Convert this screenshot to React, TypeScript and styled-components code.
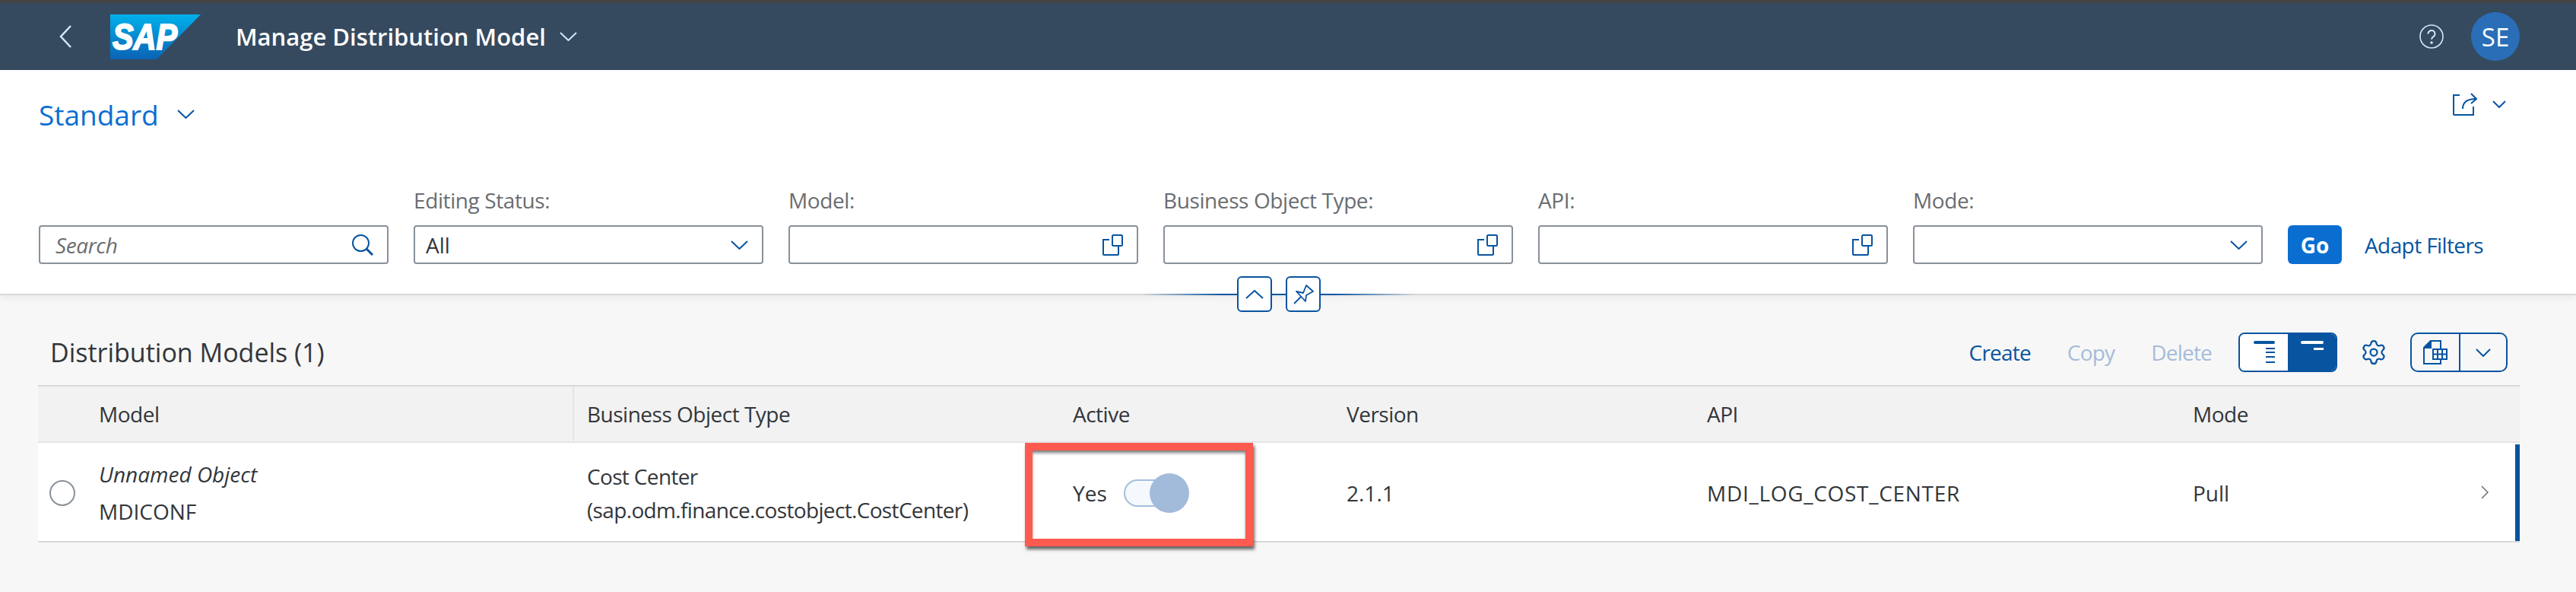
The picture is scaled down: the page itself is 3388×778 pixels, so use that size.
import React from "react";
import styled, { createGlobalStyle } from "styled-components";
import { Settings } from "lucide-react";

const Global = createGlobalStyle`
  html, body { margin: 0; padding: 0; background: #f7f7f7; }
  body { font-family: "Open Sans", "Noto Sans", sans-serif; color: #32363a; }
  * { box-sizing: border-box; }
`;

const BLUE = "#0854a0";

const Page = styled.div`
  width: 3388px;
  height: 778px;
  overflow: hidden;
  background: #f7f7f7;
`;

const Shell = styled.header`
  height: 92px;
  border-top: 4px solid #444;
  background: #354a5f;
  display: flex;
  align-items: center;
  padding: 0 74px 0 78px;
`;
const Back = styled.svg`
  width: 17px;
  height: 30px;
  margin-right: 50px;
`;
const Logo = styled.svg`
  width: 119px;
  height: 59px;
  margin-right: 46px;
`;
const AppTitle = styled.div`
  font-size: 31px;
  font-weight: 600;
  color: #fff;
  margin-right: 18px;
`;
const ShellRight = styled.div`
  margin-left: auto;
  display: flex;
  align-items: center;
  gap: 36px;
`;
const Avatar = styled.div`
  width: 64px;
  height: 64px;
  border-radius: 50%;
  background: #2a6eb7;
  color: #fff;
  font-size: 33px;
  display: flex;
  align-items: center;
  justify-content: center;
`;

const FilterBar = styled.section`
  position: relative;
  height: 296px;
  background: #fff;
  border-bottom: 2px solid #d9d9d9;
  box-shadow: 0 4px 8px rgba(0, 0, 0, 0.05);
`;
const VariantRow = styled.div`
  height: 114px;
  display: flex;
  align-items: center;
  padding: 2px 92px 0 51px;
`;
const VariantName = styled.div`
  font-size: 37px;
  color: #0a6ed1;
  margin-right: 24px;
`;
const ShareGroup = styled.div`
  margin-left: auto;
  display: flex;
  align-items: center;
  gap: 20px;
  margin-top: -26px;
`;
const Filters = styled.div`
  display: flex;
  align-items: flex-end;
  gap: 33px;
  padding: 38px 0 0 51px;
`;
const Field = styled.div`
  width: 460px;
  display: flex;
  flex-direction: column;
  gap: 14px;
`;
const FieldLabel = styled.label`
  font-size: 28px;
  line-height: 38px;
  color: #6a6d70;
  letter-spacing: -0.4px;
`;
const InputBox = styled.div`
  height: 51px;
  border: 2px solid #89919a;
  border-radius: 4px;
  background: #fff;
  display: flex;
  align-items: center;
  justify-content: space-between;
  padding: 0 18px 0 14px;
  font-size: 28px;
`;
const Placeholder = styled.span`
  font-style: italic;
  color: #6a6d70;
  padding-left: 6px;
  letter-spacing: -0.4px;
`;
const GoButton = styled.button`
  width: 71px;
  height: 51px;
  border: 0;
  border-radius: 6px;
  background: #0a6ed1;
  color: #fff;
  font: 700 28px "Open Sans", sans-serif;
  padding: 0;
`;
const TextAction = styled.span<{ $disabled?: boolean }>`
  font-size: 28px;
  letter-spacing: -0.6px;
  color: ${(p) => (p.$disabled ? "#a5bcd9" : BLUE)};
`;
const AdaptWrap = styled.div`
  height: 51px;
  display: flex;
  align-items: center;
  margin-left: -3px;
`;
const Collapse = styled.div`
  position: absolute;
  left: 1500px;
  top: 271px;
  width: 363px;
  height: 47px;
  display: flex;
  justify-content: center;
  align-items: center;
  gap: 18px;
  background: linear-gradient(to right, transparent, ${BLUE} 30%, ${BLUE} 70%, transparent) center / 100% 2px no-repeat;
`;
const CollapseButton = styled.div`
  width: 46px;
  height: 47px;
  background: #fff;
  border: 2px solid ${BLUE};
  border-radius: 6px;
  display: flex;
  align-items: center;
  justify-content: center;
`;

const Main = styled.main`
  padding: 0 74px 0 50px;
`;
const Toolbar = styled.div`
  height: 118px;
  display: flex;
  align-items: center;
  padding: 32px 16px 0 16px;
`;
const TableTitle = styled.h2`
  margin: 0;
  font-size: 34px;
  font-weight: 400;
  color: #32363a;
`;
const Actions = styled.div`
  margin-left: auto;
  display: flex;
  align-items: center;
`;
const ActionLink = styled(TextAction)<{ $last?: boolean }>`
  letter-spacing: -0.8px;
  margin-right: ${(p) => (p.$last ? "35px" : "48px")};
`;
const Segmented = styled.div`
  width: 130px;
  height: 52px;
  display: flex;
  border: 2px solid ${BLUE};
  border-radius: 8px;
  overflow: hidden;
  margin-right: 32px;
`;
const Segment = styled.div<{ $on?: boolean }>`
  flex: 1;
  background: ${(p) => (p.$on ? BLUE : "#fff")};
  display: flex;
  align-items: center;
  justify-content: center;
`;
const GearWrap = styled.div`
  width: 32px;
  height: 32px;
  margin-right: 32px;
  display: flex;
  align-items: center;
  justify-content: center;
`;
const SplitButton = styled.div`
  width: 128px;
  height: 52px;
  display: flex;
  border: 2px solid ${BLUE};
  border-radius: 10px;
`;
const SplitMain = styled.div`
  width: 64px;
  border-right: 2px solid ${BLUE};
  display: flex;
  align-items: center;
  justify-content: center;
`;
const SplitArrow = styled.div`
  flex: 1;
  display: flex;
  align-items: center;
  justify-content: center;
`;

const columns = "63px 642px 639px 360px 474px 639px 447px";
const HeaderRow = styled.div`
  display: grid;
  grid-template-columns: ${columns};
  height: 76px;
  background: #f2f2f2;
  border-top: 2px solid #d9d9d9;
  border-bottom: 2px solid #e5e5e5;
`;
const HeaderCell = styled.div<{ $divider?: boolean }>`
  display: flex;
  align-items: center;
  padding-left: 17px;
  font-size: 28px;
  letter-spacing: -0.5px;
  color: #32363a;
  border-right: ${(p) => (p.$divider ? "2px solid #e5e5e5" : "0")};
`;
const DataRow = styled.div`
  position: relative;
  display: grid;
  grid-template-columns: ${columns};
  height: 131px;
  background: #fff;
  border-bottom: 2px solid #d9d9d9;
`;
const Cell = styled.div<{ $spacing?: string }>`
  position: relative;
  display: flex;
  flex-direction: column;
  justify-content: center;
  padding: 3px 0 0 17px;
  font-size: 28px;
  line-height: 44px;
  letter-spacing: ${(p) => p.$spacing ?? "0"};
`;
const ModelCell = styled(Cell)`
  padding-top: 1px;
`;
const RadioCell = styled.div`
  display: flex;
  align-items: center;
  padding: 3px 0 0 15px;
`;
const Radio = styled.div`
  width: 34px;
  height: 34px;
  border: 2px solid #89919a;
  border-radius: 50%;
`;
const ItalicLine = styled.span`
  font-style: italic;
  margin-bottom: 5px;
`;
const ToggleLine = styled.div`
  display: flex;
  align-items: center;
  gap: 22px;
`;
const Track = styled.div`
  position: relative;
  width: 70px;
  height: 36px;
  border: 2px solid #a5bfdd;
  border-radius: 18px;
  background: #f5f9fd;
`;
const Thumb = styled.div`
  position: absolute;
  left: 32px;
  top: -10px;
  width: 52px;
  height: 52px;
  border-radius: 50%;
  background: #a3bbdb;
`;
const Highlight = styled.div`
  position: absolute;
  left: -46px;
  top: 0;
  width: 300px;
  height: 136px;
  border: 10px solid #ff5a4f;
  box-shadow: 2px 4px 4px rgba(0, 0, 0, 0.6), inset 0 4px 4px -1px rgba(0, 0, 0, 0.55);
  pointer-events: none;
`;
const RowEnd = styled.div`
  position: absolute;
  right: 0;
  top: 2px;
  bottom: 0;
  width: 6px;
  background: ${BLUE};
`;
const RowChevron = styled.svg`
  position: absolute;
  right: 41px;
  top: 56px;
  width: 10px;
  height: 18px;
`;

const Chevron = ({ w = 23, h = 12, color = BLUE, sw = 2 }: { w?: number; h?: number; color?: string; sw?: number }) => (
  <svg width={w} height={h} viewBox={`0 0 ${w} ${h}`} fill="none" stroke={color} strokeWidth={sw}>
    <path d={`M1 1 L${w / 2} ${h - 1} L${w - 1} 1`} />
  </svg>
);
const ValueHelp = () => (
  <svg width="27" height="28" viewBox="0 0 27 28" fill="none" stroke={BLUE} strokeWidth="2">
    <rect x="13" y="1" width="13" height="14" rx="1.5" />
    <path d="M9 7H1V26a1 1 0 0 0 1 1H20a1 1 0 0 0 1-1V15" />
  </svg>
);

export default function App() {
  return (
    <Page>
      <Global />
      <Shell>
        <Back viewBox="0 0 17 30" fill="none" stroke="#d1e8ff" strokeWidth="2.5">
          <path d="M15 1 L2 15 L15 29" />
        </Back>
        <Logo viewBox="0 0 119 59">
          <defs>
            <linearGradient id="sapg" x1="0" y1="0" x2="0" y2="1">
              <stop offset="0" stopColor="#00b1eb" />
              <stop offset="1" stopColor="#0a63b5" />
            </linearGradient>
          </defs>
          <polygon points="0,0 119,0 61,59 0,59" fill="url(#sapg)" />
          <text x="3" y="46" fontFamily="Liberation Sans" fontWeight="700" fontStyle="italic" fontSize="48" fill="#fff" stroke="#fff" strokeWidth="2" textLength="85" lengthAdjust="spacingAndGlyphs">SAP</text>
        </Logo>
        <AppTitle>Manage Distribution Model</AppTitle>
        <Chevron color="#d1e8ff" />
        <ShellRight>
          <svg width="32" height="32" viewBox="0 0 32 32" fill="none" stroke="#d1e8ff" strokeWidth="1.6">
            <circle cx="16" cy="16" r="15" />
            <path d="M11.5 12.5a4.5 4.5 0 1 1 7 3.7c-1.6 1-2.5 2-2.5 3.6" strokeWidth="2" />
            <circle cx="16" cy="24" r="1" fill="#d1e8ff" />
          </svg>
          <Avatar>SE</Avatar>
        </ShellRight>
      </Shell>
      <FilterBar>
        <VariantRow>
          <VariantName>Standard</VariantName>
          <Chevron color={BLUE} />
          <ShareGroup>
            <svg width="32" height="30" viewBox="0 0 32 30" fill="none" stroke={BLUE} strokeWidth="2">
              <path d="M9 3H1V28a1 1 0 0 0 1 1H27V18" />
              <path d="M13 21c0-8 5-13 17-13" />
              <path d="M24 1 L31 8 L24 14" />
            </svg>
            <Chevron w={18} h={10} />
          </ShareGroup>
        </VariantRow>
        <Filters>
          <Field>
            <InputBox>
              <Placeholder>Search</Placeholder>
              <svg width="28" height="28" viewBox="0 0 28 28" fill="none" stroke={BLUE} strokeWidth="2">
                <circle cx="11.5" cy="11.5" r="10.5" />
                <path d="M19 19 L27 27" strokeWidth="3" />
              </svg>
            </InputBox>
          </Field>
          <Field>
            <FieldLabel>Editing Status:</FieldLabel>
            <InputBox>
              <span>All</span>
              <Chevron />
            </InputBox>
          </Field>
          <Field>
            <FieldLabel>Model:</FieldLabel>
            <InputBox>
              <span />
              <ValueHelp />
            </InputBox>
          </Field>
          <Field>
            <FieldLabel>Business Object Type:</FieldLabel>
            <InputBox>
              <span />
              <ValueHelp />
            </InputBox>
          </Field>
          <Field>
            <FieldLabel>API:</FieldLabel>
            <InputBox>
              <span />
              <ValueHelp />
            </InputBox>
          </Field>
          <Field>
            <FieldLabel>Mode:</FieldLabel>
            <InputBox>
              <span />
              <Chevron />
            </InputBox>
          </Field>
          <GoButton>Go</GoButton>
          <AdaptWrap>
            <TextAction>Adapt Filters</TextAction>
          </AdaptWrap>
        </Filters>
        <Collapse>
          <CollapseButton>
            <svg width="24" height="12" viewBox="0 0 24 12" fill="none" stroke={BLUE} strokeWidth="2">
              <path d="M1 11 L12 1 L23 11" />
            </svg>
          </CollapseButton>
          <CollapseButton>
            <svg width="28" height="28" viewBox="0 0 28 28" fill="none" stroke={BLUE} strokeWidth="1.8" strokeLinejoin="round">
              <path d="M5 10 L14 12 L18 2 L27 10 L18 15 L17 23 Z" />
              <path d="M11 17 L2 26" />
            </svg>
          </CollapseButton>
        </Collapse>
      </FilterBar>
      <Main>
        <Toolbar>
          <TableTitle>Distribution Models (1)</TableTitle>
          <Actions>
            <ActionLink>Create</ActionLink>
            <ActionLink $disabled>Copy</ActionLink>
            <ActionLink $disabled $last>Delete</ActionLink>
            <Segmented>
              <Segment>
                <svg width="28" height="30" viewBox="0 0 28 30" fill={BLUE}>
                  <rect x="0" y="0" width="28" height="4" rx="2" />
                  <rect x="16" y="9" width="12" height="2" />
                  <rect x="16" y="14" width="12" height="2" />
                  <rect x="16" y="20" width="12" height="2" />
                  <rect x="16" y="27" width="12" height="2" />
                </svg>
              </Segment>
              <Segment $on>
                <svg width="30" height="30" viewBox="0 0 30 30" fill="#fff">
                  <rect x="0" y="0" width="30" height="4" rx="2" />
                  <rect x="17" y="9" width="13" height="3" />
                </svg>
              </Segment>
            </Segmented>
            <GearWrap>
              <Settings size={36} color={BLUE} strokeWidth={1.5} style={{ flexShrink: 0 }} />
            </GearWrap>
            <SplitButton>
              <SplitMain>
                <svg width="32" height="32" viewBox="0 0 32 32" fill="none" stroke={BLUE} strokeWidth="2">
                  <path d="M1 10 L10 1 H23 V11" />
                  <path d="M23 25 V31 H1 V10" />
                  <path d="M1 10 H10 V1 Z" fill={BLUE} />
                  <rect x="13" y="12" width="18" height="13" />
                  <path d="M19 12V25M25 12V25M13 18.5H31" />
                </svg>
              </SplitMain>
              <SplitArrow>
                <Chevron w={20} h={11} />
              </SplitArrow>
            </SplitButton>
          </Actions>
        </Toolbar>
        <HeaderRow>
          <HeaderCell />
          <HeaderCell $divider>Model</HeaderCell>
          <HeaderCell>Business Object Type</HeaderCell>
          <HeaderCell>Active</HeaderCell>
          <HeaderCell>Version</HeaderCell>
          <HeaderCell>API</HeaderCell>
          <HeaderCell>Mode</HeaderCell>
        </HeaderRow>
        <DataRow>
          <RadioCell>
            <Radio />
          </RadioCell>
          <ModelCell>
            <ItalicLine>Unnamed Object</ItalicLine>
            <span>MDICONF</span>
          </ModelCell>
          <Cell $spacing="-0.65px">
            <span>Cost Center</span>
            <span>(sap.odm.finance.costobject.CostCenter)</span>
          </Cell>
          <Cell>
            <ToggleLine>
              <span>Yes</span>
              <Track>
                <Thumb />
              </Track>
            </ToggleLine>
            <Highlight />
          </Cell>
          <Cell>2.1.1</Cell>
          <Cell $spacing="0.7px">MDI_LOG_COST_CENTER</Cell>
          <Cell>Pull</Cell>
          <RowChevron viewBox="0 0 10 18" fill="none" stroke="#6a6d70" strokeWidth="1.5">
            <path d="M1 1 L9 9 L1 17" />
          </RowChevron>
          <RowEnd />
        </DataRow>
      </Main>
    </Page>
  );
}
